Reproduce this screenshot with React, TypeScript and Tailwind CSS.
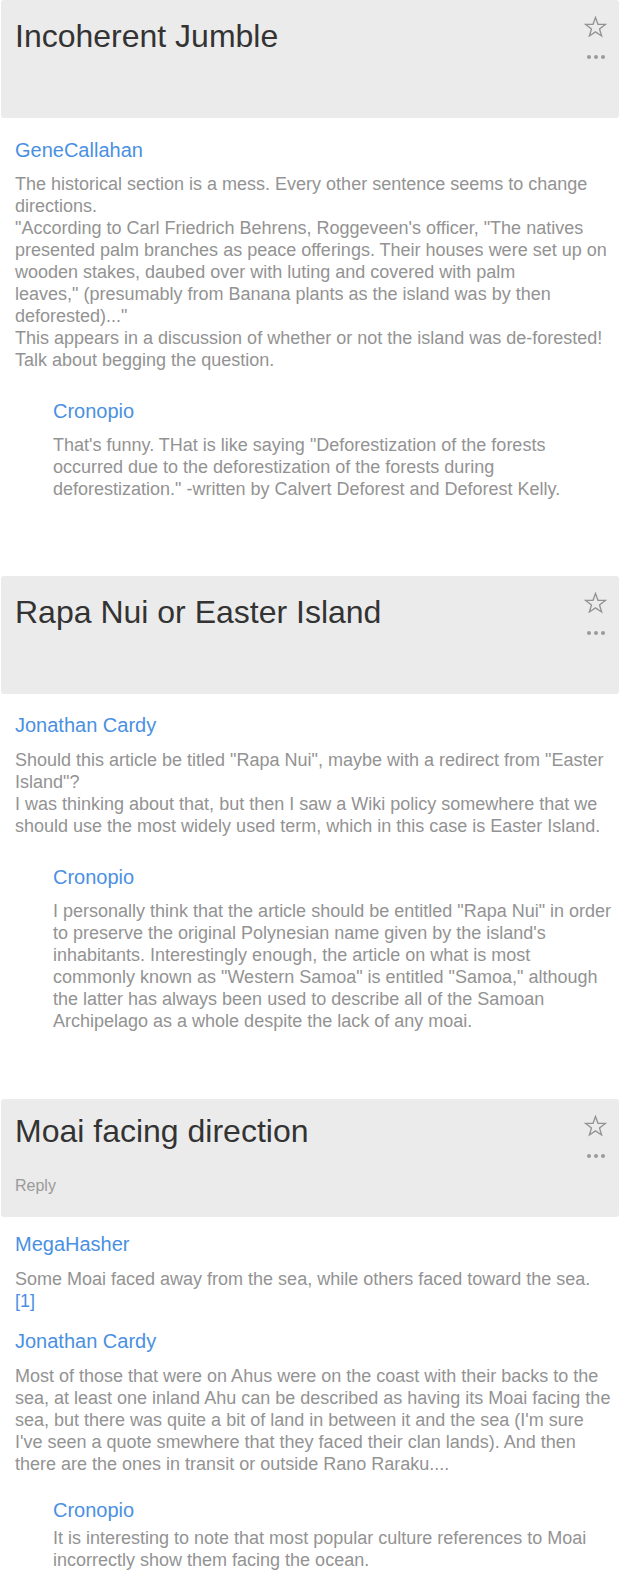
import React from 'react';

type Reply = { user: string; lines: React.ReactNode; top: string; gap: string };
type Comment = { user: string; lines: React.ReactNode; top: string; gap: string; replies?: Reply[] };
type Topic = { title: string; reply?: boolean; titleTop: string; bottom: string; comments: Comment[] };

const topics: Topic[] = [
  {
    title: 'Incoherent Jumble',
    titleTop: 'pt-4',
    bottom: 'h-[76px]',
    comments: [
      {
        user: 'GeneCallahan',
        top: 'mt-[21px]',
        gap: 'mt-[12px]',
        lines: (
          <>
            The historical section is a mess. Every other sentence seems to change directions.
            <br />
            "According to Carl Friedrich Behrens, Roggeveen's officer, "The natives presented palm branches as peace
            offerings. Their houses were set up on wooden stakes, daubed over with luting and covered with palm
            <br />
            leaves," (presumably from Banana plants as the island was by then deforested)..."
            <br />
            This appears in a discussion of whether or not the island was de-forested! Talk about begging the question.
          </>
        ),
        replies: [
          {
            user: 'Cronopio',
            top: 'mt-[29px]',
            gap: 'mt-[12px]',
            lines: (
              <>
                That's funny. THat is like saying "Deforestization of the forests occurred due to the deforestization
                of the forests during deforestization." -written by Calvert Deforest and Deforest Kelly.
              </>
            ),
          },
        ],
      },
    ],
  },
  {
    title: 'Rapa Nui or Easter Island',
    titleTop: 'pt-4',
    bottom: 'h-[67px]',
    comments: [
      {
        user: 'Jonathan Cardy',
        top: 'mt-[20px]',
        gap: 'mt-[13px]',
        lines: (
          <>
            Should this article be titled "Rapa Nui", maybe with a redirect from "Easter Island"?
            <br />
            I was thinking about that, but then I saw a Wiki policy somewhere that we should use the most widely used
            term, which in this case is Easter Island.
          </>
        ),
        replies: [
          {
            user: 'Cronopio',
            top: 'mt-[29px]',
            gap: 'mt-[12px]',
            lines: (
              <>
                I personally think that the article should be entitled "Rapa Nui" in order to preserve the original
                Polynesian name given by the island's inhabitants. Interestingly enough, the article on what is most
                commonly known as "Western Samoa" is entitled "Samoa," although the latter has always been used to
                describe all of the Samoan Archipelago as a whole despite the lack of any moai.
              </>
            ),
          },
        ],
      },
    ],
  },
  {
    title: 'Moai facing direction',
    reply: true,
    titleTop: 'pt-3',
    bottom: 'h-[20px]',
    comments: [
      {
        user: 'MegaHasher',
        top: 'mt-[16px]',
        gap: 'mt-[13px]',
        lines: (
          <>
            Some Moai faced away from the sea, while others faced toward the sea.
            <span className="block text-[#4a90e2]">[1]</span>
          </>
        ),
      },
      {
        user: 'Jonathan Cardy',
        top: 'mt-[18px]',
        gap: 'mt-[13px]',
        lines: (
          <>
            Most of those that were on Ahus were on the coast with their backs to the sea, at least one inland Ahu can
            be described as having its Moai facing the sea, but there was quite a bit of land in between it and the sea
            (I'm sure I've seen a quote smewhere that they faced their clan lands). And then there are the ones in
            transit or outside Rano Raraku....
          </>
        ),
        replies: [
          {
            user: 'Cronopio',
            top: 'mt-[24px]',
            gap: 'mt-[6px]',
            lines: (
              <>
                It is interesting to note that most popular culture references to Moai incorrectly show them facing the
                ocean.
              </>
            ),
          },
        ],
      },
    ],
  },
];

const Star = () => (
  <svg width="23" height="22" viewBox="0 0 24 23" fill="none" stroke="#939393" strokeWidth="1.4" strokeLinejoin="miter">
    <path d="M12 1.5 L14.6 8.6 L22.2 8.8 L16.2 13.5 L18.4 20.9 L12 16.6 L5.6 20.9 L7.8 13.5 L1.8 8.8 L9.4 8.6 Z" />
  </svg>
);

const Dots = () => (
  <div className="flex gap-[3px]">
    <span className="w-1 h-1 rounded-full bg-[#9a9a9a]" />
    <span className="w-1 h-1 rounded-full bg-[#9a9a9a]" />
    <span className="w-1 h-1 rounded-full bg-[#9a9a9a]" />
  </div>
);

const Post: React.FC<{ user: string; lines: React.ReactNode; top: string; gap: string }> = ({ user, lines, top, gap }) => (
  <div className={top}>
    <div className="text-[20px] leading-[22px] text-[#4a90e2]">{user}</div>
    <div className={`${gap} text-[18px] leading-[22px] text-[#939393]`}>{lines}</div>
  </div>
);

export default function App() {
  return (
    <div className="w-[620px] bg-white" style={{ fontFamily: '"Liberation Sans", Arial, Helvetica, sans-serif' }}>
      {topics.map((topic) => (
        <section key={topic.title}>
          <div className="mx-px h-[118px] rounded-[3px] bg-[#ebebeb] flex justify-between">
            <div className={`pl-[14px] ${topic.titleTop}`}>
              <h2 className="text-[32px] leading-10 text-[#333333]">{topic.title}</h2>
              {topic.reply && <div className="mt-[25px] text-[16px] leading-5 text-[#9a9a9a]">Reply</div>}
            </div>
            <div className="flex flex-col items-center pt-[16px] pr-[12px]">
              <Star />
              <div className="mt-[17px]">
                <Dots />
              </div>
            </div>
          </div>
          <div className="pl-[15px] pr-[8px]">
            {topic.comments.map((c, i) => (
              <div key={i}>
                <Post user={c.user} lines={c.lines} top={c.top} gap={c.gap} />
                {c.replies?.map((r, j) => (
                  <div key={j} className="ml-[38px]">
                    <Post user={r.user} lines={r.lines} top={r.top} gap={r.gap} />
                  </div>
                ))}
              </div>
            ))}
          </div>
          <div className={topic.bottom} />
        </section>
      ))}
    </div>
  );
}
